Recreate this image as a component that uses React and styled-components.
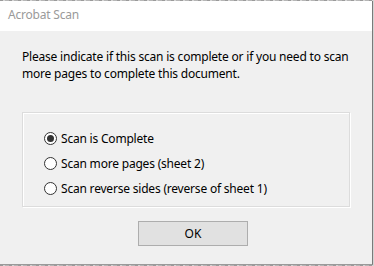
import React, { useState } from 'react'
import styled, { createGlobalStyle } from 'styled-components'

const Global = createGlobalStyle`
  html, body { margin: 0; padding: 0; background: #6f6f6f; }
  body { font-family: "Noto Sans", "Open Sans", sans-serif; font-size: 12px; letter-spacing: -0.2px; }
`

const Screen = styled.div`
  width: 374px;
  height: 266px;
  display: flex;
  flex-direction: column;
  overflow: hidden;
  background: repeating-linear-gradient(90deg, #9a9a9a 0 3px, #d4d4d4 3px 5px, #b6b6b6 5px 9px);
`

const Strip = styled.div`
  height: ${p => p.h}px;
  flex: none;
`

const Window = styled.div`
  width: 373px;
  height: 264px;
  flex: none;
  display: flex;
  flex-direction: column;
  background: #f0f0f0;
  border-right: 1px solid #7a7a7a;
  border-bottom: 1px solid #9a9a9a;
  box-sizing: border-box;
`

const TitleBar = styled.div`
  height: 30px;
  flex: none;
  background: #fff;
  color: #9a9a9a;
  padding: 0 0 3px 8px;
  display: flex;
  align-items: center;
  font-size: 12px;
  box-sizing: border-box;
`

const Body = styled.div`
  flex: 1;
  display: flex;
  flex-direction: column;
  padding: 17px 22px 0 22px;
`

const Message = styled.p`
  margin: 0;
  color: #000;
  line-height: 17px;
  font-size: 12px;
  white-space: nowrap;
`

const Group = styled.div`
  margin-top: 30px;
  width: 328px;
  height: 95px;
  box-sizing: border-box;
  border: 1px solid #dcdcdc;
  box-shadow: inset 1px 1px 0 #fff, 1px 1px 0 #fff;
  display: flex;
  flex-direction: column;
  gap: 7px;
  padding: 16px 0 0 21px;
`

const Option = styled.label`
  display: flex;
  align-items: center;
  gap: 4px;
  height: 18px;
  color: #000;
  cursor: default;
`

const Radio = styled.span`
  width: 13px;
  height: 13px;
  flex: none;
  box-sizing: border-box;
  border-radius: 50%;
  border: 1px solid #333;
  background: #fff;
  display: flex;
  align-items: center;
  justify-content: center;
  &::after {
    content: '';
    width: 7px;
    height: 7px;
    border-radius: 50%;
    background: ${p => (p.checked ? '#333' : 'transparent')};
  }
`

const Footer = styled.div`
  display: flex;
  padding: 14px 0 0 116px;
`

const Button = styled.button`
  width: 110px;
  height: 25px;
  background: #e1e1e1;
  border: 1px solid #adadad;
  font-family: inherit;
  font-size: 12px;
  color: #000;
  padding: 0;
`

const options = [
  'Scan is Complete',
  'Scan more pages (sheet 2)',
  'Scan reverse sides (reverse of sheet 1)',
]

export default function App() {
  const [sel, setSel] = useState(0)
  return (
    <>
      <Global />
      <Screen>
        <Strip h={1} />
        <Window>
          <TitleBar>Acrobat Scan</TitleBar>
          <Body>
            <Message>
              Please indicate if this scan is complete or if you need to scan
              <br />
              more pages to complete this document.
            </Message>
            <Group>
              {options.map((o, i) => (
                <Option key={o} onClick={() => setSel(i)}>
                  <Radio checked={sel === i} />
                  {o}
                </Option>
              ))}
            </Group>
            <Footer>
              <Button>OK</Button>
            </Footer>
          </Body>
        </Window>
      </Screen>
    </>
  )
}
